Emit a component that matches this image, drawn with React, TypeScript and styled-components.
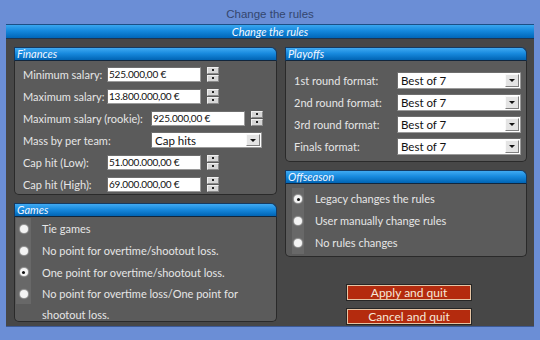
import React from "react";
import styled, { createGlobalStyle } from "styled-components";

const Global = createGlobalStyle`
  html, body { margin: 0; padding: 0; }
  * { box-sizing: border-box; }
`;

const Window = styled.div`
  width: 540px;
  height: 340px;
  background: #6b8ed6;
  display: flex;
  flex-direction: column;
  font-family: Lato, "Liberation Sans", Arial, sans-serif;
  overflow: hidden;
`;

const TitleBar = styled.div`
  height: 24px;
  flex: none;
  display: flex;
  align-items: center;
  justify-content: center;
  color: #34466e;
  font-family: "Liberation Sans", Arial, sans-serif;
  font-size: 11.5px;
  padding-top: 3px;
`;

const Frame = styled.div`
  flex: 1;
  min-height: 0;
  margin: 0 6px 13px;
  display: flex;
  flex-direction: column;
`;

const MainHeader = styled.div`
  height: 15px;
  flex: none;
  background: linear-gradient(#3aa6f0 0%, #1488dc 45%, #0066b8 100%);
  border-top: 1px solid #1b4f86;
  border-bottom: 1px solid #1d3550;
  color: #f4f8ff;
  font-style: italic;
  font-size: 11px;
  display: flex;
  align-items: center;
  justify-content: center;
`;

const Content = styled.div`
  flex: 1;
  min-height: 0;
  overflow: hidden;
  background: #474747;
  display: grid;
  grid-template-columns: 263px 242px;
  grid-template-rows: 100%;
  column-gap: 8px;
  padding: 8px 7px 0 8px;
  border-bottom: 1px solid #3d5a96;
`;

const Column = styled.div`
  display: flex;
  flex-direction: column;
  gap: 8px;
  min-height: 0;
`;

const Panel = styled.div`
  display: flex;
  flex-direction: column;
  flex: none;
`;

const PanelHeader = styled.div`
  height: 14px;
  flex: none;
  background: linear-gradient(#40aaf2 0%, #188ade 45%, #0064b4 100%);
  border: 1px solid #173a60;
  border-bottom-color: #12263c;
  border-top-right-radius: 6px;
  color: #f2f6ff;
  font-style: italic;
  font-size: 11px;
  line-height: 12px;
  padding-left: 2px;
`;

const PanelBody = styled.div<{ $h: number; $pt: number; $pl: number }>`
  height: ${(p) => p.$h}px;
  flex: none;
  overflow: hidden;
  background: #5b5b5b;
  border: 1px solid #2a2a2a;
  border-top: none;
  border-radius: 0 0 5px 5px;
  padding: ${(p) => p.$pt}px 0 0 ${(p) => p.$pl}px;
  display: flex;
  flex-direction: column;
`;

const Row = styled.div<{ $h?: number }>`
  height: ${(p) => p.$h ?? 22}px;
  flex: none;
  display: flex;
  align-items: center;
`;

const Label = styled.span<{ $w: number }>`
  width: ${(p) => p.$w}px;
  flex: none;
  color: #e6e6e6;
  font-size: 11px;
  white-space: nowrap;
`;

const TextBox = styled.div<{ $w: number }>`
  width: ${(p) => p.$w}px;
  height: 15px;
  background: #fff;
  border: 1px solid #9a9a9a;
  border-top-color: #6e6e6e;
  border-left-color: #6e6e6e;
  color: #111;
  font-size: 10px;
  letter-spacing: -0.2px;
  line-height: 13px;
  padding-left: 1px;
  white-space: nowrap;
`;

const Spinner = styled.div`
  width: 12px;
  height: 15px;
  margin-left: 6px;
  display: flex;
  flex-direction: column;
  gap: 1px;
`;

const SpinHalf = styled.div`
  flex: 1;
  background: #d6d6d6;
  border: 1px solid #f0f0f0;
  border-right-color: #8a8a8a;
  border-bottom-color: #8a8a8a;
  display: flex;
  align-items: center;
  justify-content: center;
  &::after {
    content: "";
    width: 2px;
    height: 2px;
    background: #222;
  }
`;

const Combo = styled.div<{ $w: number; $h: number }>`
  width: ${(p) => p.$w}px;
  height: ${(p) => p.$h}px;
  background: #fff;
  border: 1px solid #9a9a9a;
  border-top-color: #6e6e6e;
  border-left-color: #6e6e6e;
  display: flex;
  align-items: center;
  padding: 1px;
`;

const ComboText = styled.span`
  flex: 1;
  color: #111;
  font-size: 11.5px;
  padding-left: 2px;
`;

const DropButton = styled.div`
  width: 14px;
  height: 100%;
  background: #e4e4e4;
  border: 1px solid #fafafa;
  border-right-color: #808080;
  border-bottom-color: #808080;
  display: flex;
  align-items: center;
  justify-content: center;
  &::after {
    content: "";
    border-left: 3px solid transparent;
    border-right: 3px solid transparent;
    border-top: 3px solid #111;
  }
`;

const RadioItem = styled.div<{ $lh: number }>`
  display: flex;
  flex: none;
  align-items: flex-start;
  line-height: ${(p) => p.$lh}px;
`;

const RadioBox = styled.div<{ $w: number; $lh: number }>`
  width: ${(p) => p.$w}px;
  height: ${(p) => p.$lh}px;
  flex: none;
  background: #686868;
  display: flex;
  align-items: center;
  justify-content: center;
`;

const RadioDot = styled.div<{ $on?: boolean }>`
  width: 8px;
  height: 8px;
  border-radius: 50%;
  background: #f4f4f4;
  box-shadow: 0 0 1px 1px rgba(255, 255, 255, 0.35);
  display: flex;
  align-items: center;
  justify-content: center;
  &::after {
    content: "";
    width: 3px;
    height: 3px;
    border-radius: 50%;
    background: ${(p) => (p.$on ? "#111" : "transparent")};
  }
`;

const RadioLabel = styled.span<{ $gap: number; $w?: number }>`
  margin-left: ${(p) => p.$gap}px;
  color: #e6e6e6;
  font-size: 11px;
  ${(p) => (p.$w ? `width: ${p.$w}px;` : "")}
`;

const ButtonStack = styled.div`
  margin-top: 20px;
  padding-left: 62px;
  display: flex;
  flex-direction: column;
  align-items: flex-start;
  gap: 9px;
`;

const Button = styled.div`
  width: 124px;
  height: 15px;
  background: #b42b0e;
  border: 1px solid #e6c4a4;
  box-shadow: 0 0 0 1px #262626;
  color: #f6e8da;
  font-size: 12px;
  line-height: 13px;
  text-align: center;
`;

function Field({ label, w, value, box = 94 }: { label: string; w: number; value: string; box?: number }) {
  return (
    <Row>
      <Label $w={w}>{label}</Label>
      <TextBox $w={box}>{value}</TextBox>
      <Spinner>
        <SpinHalf />
        <SpinHalf />
      </Spinner>
    </Row>
  );
}

function Radio({ label, on, boxW, gap, lh, w }: { label: string; on?: boolean; boxW: number; gap: number; lh: number; w?: number }) {
  return (
    <RadioItem $lh={lh}>
      <RadioBox $w={boxW} $lh={lh}>
        <RadioDot $on={on} />
      </RadioBox>
      <RadioLabel $gap={gap} $w={w}>{label}</RadioLabel>
    </RadioItem>
  );
}

const playoffRows = ["1st round format:", "2nd round format:", "3rd round format:", "Finals format:"];

export default function App() {
  return (
    <>
      <Global />
      <Window>
        <TitleBar>Change the rules</TitleBar>
        <Frame>
          <MainHeader>Change the rules</MainHeader>
          <Content>
            <Column>
              <Panel>
                <PanelHeader>Finances</PanelHeader>
                <PanelBody $h={134} $pt={2} $pl={8}>
                  <Field label="Minimum salary:" w={84} value="525.000,00 €" />
                  <Field label="Maximum salary:" w={84} value="13.800.000,00 €" />
                  <Field label="Maximum salary (rookie):" w={128} value="925.000,00 €" />
                  <Row>
                    <Label $w={128}>Mass by per team:</Label>
                    <Combo $w={111} $h={16}>
                      <ComboText>Cap hits</ComboText>
                      <DropButton />
                    </Combo>
                  </Row>
                  <Field label="Cap hit (Low):" w={84} value="51.000.000,00 €" />
                  <Field label="Cap hit (High):" w={84} value="69.000.000,00 €" />
                </PanelBody>
              </Panel>
              <Panel>
                <PanelHeader>Games</PanelHeader>
                <PanelBody $h={105} $pt={1} $pl={1}>
                  <Radio label="Tie games" boxW={15} gap={11} lh={22} />
                  <Radio label="No point for overtime/shootout loss." boxW={15} gap={11} lh={21.5} />
                  <Radio label="One point for overtime/shootout loss." on boxW={15} gap={11} lh={21.5} />
                  <Radio label="No point for overtime loss/One point for shootout loss." boxW={15} gap={11} lh={21} w={200} />
                </PanelBody>
              </Panel>
            </Column>
            <Column>
              <Panel>
                <PanelHeader>Playoffs</PanelHeader>
                <PanelBody $h={101} $pt={8} $pl={8}>
                  {playoffRows.map((r) => (
                    <Row key={r}>
                      <Label $w={103}>{r}</Label>
                      <Combo $w={124} $h={17}>
                        <ComboText>Best of 7</ComboText>
                        <DropButton />
                      </Combo>
                    </Row>
                  ))}
                </PanelBody>
              </Panel>
              <Panel>
                <PanelHeader>Offseason</PanelHeader>
                <PanelBody $h={73} $pt={4} $pl={6}>
                  <Radio label="Legacy changes the rules" on boxW={12} gap={11} lh={22} />
                  <Radio label="User manually change rules" boxW={12} gap={11} lh={22} />
                  <Radio label="No rules changes" boxW={12} gap={11} lh={22} />
                </PanelBody>
              </Panel>
              <ButtonStack>
                <Button>Apply and quit</Button>
                <Button>Cancel and quit</Button>
              </ButtonStack>
            </Column>
          </Content>
        </Frame>
      </Window>
    </>
  );
}
